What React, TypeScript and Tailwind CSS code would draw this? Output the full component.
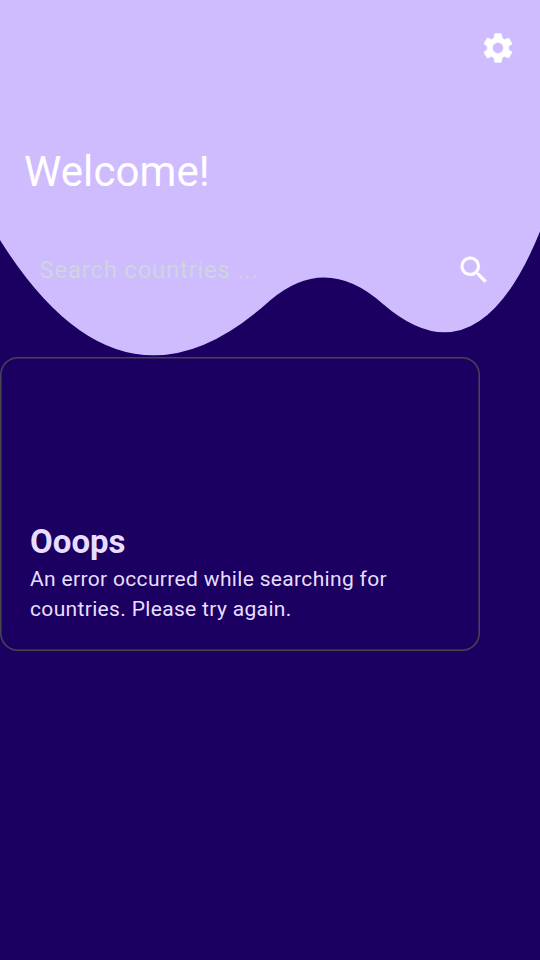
function SettingsIcon() {
  return (
    <svg
      className="size-9 text-white"
      viewBox="0 0 24 24"
      fill="currentColor"
      stroke="currentColor"
      strokeWidth="0.25"
      aria-hidden="true"
    >
      <path d="M19.14 12.94c.04-.3.06-.61.06-.94 0-.32-.02-.64-.07-.94l2.03-1.58a.49.49 0 0 0 .12-.61l-1.92-3.32a.488.488 0 0 0-.59-.22l-2.39.96c-.5-.38-1.03-.7-1.62-.94l-.36-2.54a.484.484 0 0 0-.48-.41h-3.84c-.24 0-.43.17-.47.41l-.36 2.54c-.59.24-1.13.57-1.62.94l-2.39-.96c-.22-.08-.47 0-.59.22L2.74 8.87c-.12.21-.08.47.12.61l2.03 1.58c-.05.3-.09.63-.09.94s.02.64.07.94l-2.03 1.58a.49.49 0 0 0-.12.61l1.92 3.32c.12.22.37.29.59.22l2.39-.96c.5.38 1.03.7 1.62.94l.36 2.54c.05.24.24.41.48.41h3.84c.24 0 .44-.17.47-.41l.36-2.54c.59-.24 1.13-.56 1.62-.94l2.39.96c.22.08.47 0 .59-.22l1.92-3.32c.12-.22.07-.47-.12-.61l-2.01-1.58zM12 15.6c-1.98 0-3.6-1.62-3.6-3.6s1.62-3.6 3.6-3.6 3.6 1.62 3.6 3.6-1.62 3.6-3.6 3.6z" />
    </svg>
  );
}

function SearchIcon() {
  return (
    <svg
      className="size-9 text-white"
      viewBox="0 0 24 24"
      fill="currentColor"
      stroke="currentColor"
      strokeWidth="0.1"
      aria-hidden="true"
    >
      <path d="M15.5 14h-.79l-.28-.27A6.471 6.471 0 0 0 16 9.5 6.5 6.5 0 1 0 9.5 16c1.61 0 3.09-.59 4.23-1.57l.27.28v.79l5 4.99L20.49 19l-4.99-5zm-6 0C7.01 14 5 11.99 5 9.5S7.01 5 9.5 5 14 7.01 14 9.5 11.99 14 9.5 14z" />
    </svg>
  );
}

function Wave() {
  return (
    <svg
      className="absolute inset-x-0 top-0 -z-10 h-[357px] w-[540px] text-[#cfbcff]"
      viewBox="0 0 540 357"
      fill="currentColor"
      aria-hidden="true"
    >
      <path d="M0 0V240Q122.2 435 270 300.4Q326 252.7 383 304Q477.5 385.8 540 231.5V0Z" />
    </svg>
  );
}

function Header() {
  return (
    <header className="relative isolate flex h-[357px] flex-col">
      <Wave />
      <div className="flex justify-end pt-[30px] pr-6">
        <button type="button" aria-label="Settings">
          <SettingsIcon />
        </button>
      </div>
      <h1 className="mt-[79px] pl-6 text-[42px] leading-[54px] tracking-[0.1px] text-white">
        Welcome!
      </h1>
      <div className="mt-[53px] flex h-9 items-center justify-between pr-12 pl-[39.5px]">
        <span className="text-2xl leading-9 tracking-[0.74px] text-[#cdd5de]">
          Search countries ...
        </span>
        <button type="button" aria-label="Search">
          <SearchIcon />
        </button>
      </div>
    </header>
  );
}

function ErrorCard() {
  return (
    <section className="flex h-[294px] w-[480px] flex-col justify-end rounded-[18px] px-[30px] pb-[27px] text-[#e7deff] shadow-[inset_0_0_0_1.5px_#49454e]">
      <h2 className="mb-px text-[33px] leading-[42px] font-bold">Ooops</h2>
      <p className="text-[21px] leading-[30px] tracking-[0.335px]">
        An error occurred while searching for countries. Please try again.
      </p>
    </section>
  );
}

export default function App() {
  return (
    <main className="h-[960px] w-[540px] overflow-hidden bg-[#1c0061] font-[Roboto,sans-serif]">
      <Header />
      <ErrorCard />
    </main>
  );
}
